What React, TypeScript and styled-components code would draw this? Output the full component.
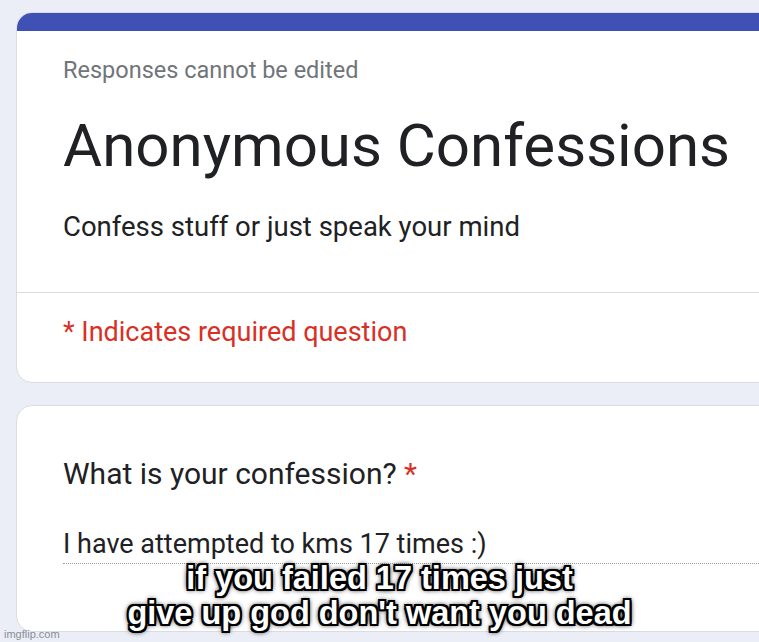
import React from "react";
import styled, { createGlobalStyle } from "styled-components";

const Global = createGlobalStyle`
  html, body { margin: 0; padding: 0; }
  body {
    background: #ebedf7;
    font-family: Roboto, "Noto Sans", Arial, sans-serif;
    overflow: hidden;
  }
`;

const Page = styled.div`
  position: relative;
  width: 759px;
  height: 642px;
  overflow: hidden;
  padding: 12px 0 0 16px;
  box-sizing: border-box;
  display: flex;
  flex-direction: column;
  gap: 22px;
`;

const Card = styled.div<{ $height: number }>`
  width: 800px;
  height: ${(p) => p.$height}px;
  box-sizing: border-box;
  background: #ffffff;
  border: 1px solid #dadce0;
  border-radius: 16px;
  overflow: hidden;
  display: flex;
  flex-direction: column;
  flex-shrink: 0;
`;

const TopBar = styled.div`
  height: 19px;
  background: #3f51b5;
  margin: -1px -1px 0 -1px;
`;

const Section = styled.div`
  padding: 0 0 0 46px;
  display: flex;
  flex-direction: column;
`;

const Notice = styled.div`
  margin-top: 25px;
  font-size: 23.5px;
  line-height: 28px;
  color: #70757a;
`;

const Title = styled.h1`
  margin: 26px 0 0 0;
  font-size: 60px;
  font-weight: 400;
  line-height: 72px;
  color: #202124;
`;

const Subtitle = styled.div`
  margin-top: 27px;
  font-size: 27.5px;
  line-height: 36px;
  color: #202124;
`;

const Divider = styled.div`
  height: 1px;
  background: #dadce0;
  margin-top: 47px;
`;

const Required = styled.div`
  margin-top: 21px;
  font-size: 27px;
  line-height: 36px;
  color: #d93025;
`;

const Question = styled.div`
  margin-top: 49px;
  font-size: 30px;
  line-height: 38px;
  color: #202124;
`;

const Star = styled.span`
  color: #d93025;
`;

const Answer = styled.div`
  margin-top: 34px;
  font-size: 27px;
  line-height: 34px;
  color: #202124;
  border-bottom: 1px dotted #9aa0a6;
  padding-bottom: 2px;
`;

const Caption = styled.div`
  position: absolute;
  left: 0;
  right: 0;
  top: 561px;
  text-align: center;
  font-family: "Liberation Sans", Arial, sans-serif;
  font-weight: 700;
  font-size: 32.5px;
  line-height: 35px;
  color: #ffffff;
  text-shadow:
    -2px -2px 0 #000, 2px -2px 0 #000, -2px 2px 0 #000, 2px 2px 0 #000,
    0 -2px 0 #000, 0 2px 0 #000, -2px 0 0 #000, 2px 0 0 #000,
    0 0 5px #000, 0 0 6px #000;
`;

const Watermark = styled.div`
  position: absolute;
  left: 4px;
  bottom: 2px;
  font-family: "Liberation Sans", Arial, sans-serif;
  font-size: 11px;
  color: #8a8d96;
`;

export default function App() {
  return (
    <>
      <Global />
      <Page>
        <Card $height={371}>
          <TopBar />
          <Section>
            <Notice>Responses cannot be edited</Notice>
            <Title>Anonymous Confessions</Title>
            <Subtitle>Confess stuff or just speak your mind</Subtitle>
          </Section>
          <Divider />
          <Section>
            <Required>* Indicates required question</Required>
          </Section>
        </Card>
        <Card $height={227}>
          <Section>
            <Question>
              What is your confession? <Star>*</Star>
            </Question>
            <Answer>I have attempted to kms 17 times :)</Answer>
          </Section>
        </Card>
        <Caption>
          if you failed 17 times just
          <br />
          give up god don't want you dead
        </Caption>
        <Watermark>imgflip.com</Watermark>
      </Page>
    </>
  );
}
